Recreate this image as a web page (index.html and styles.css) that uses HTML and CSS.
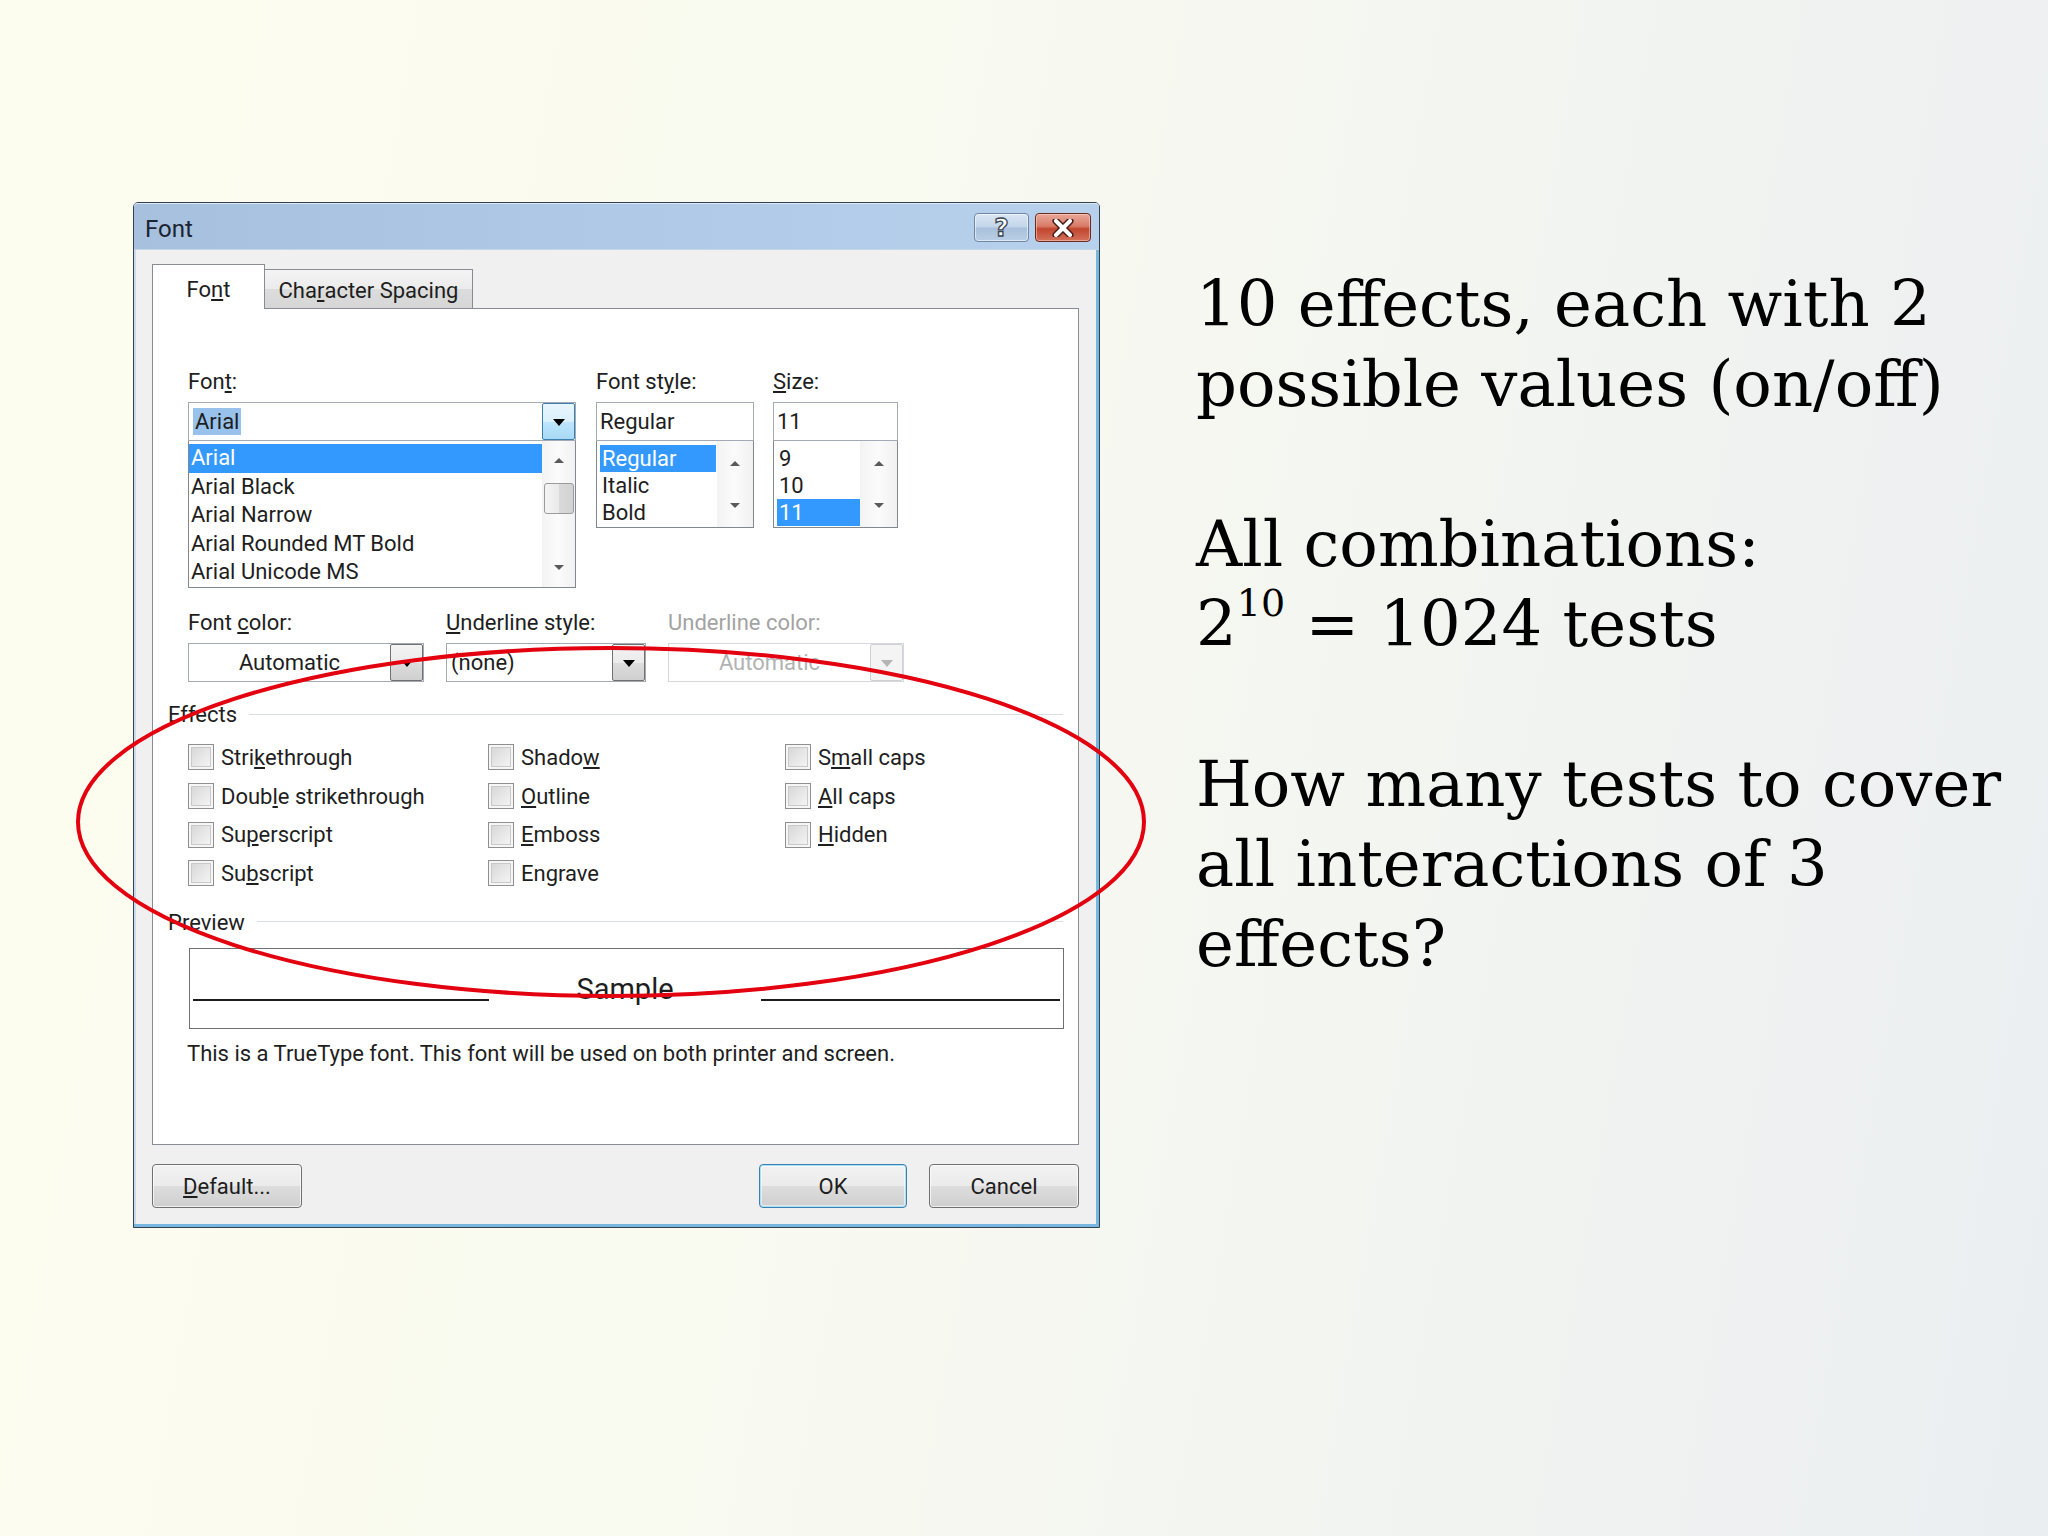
FILE: index.html
```html
<!DOCTYPE html>
<html>
<head>
<meta charset="utf-8">
<title>Font dialog – effects</title>
<link rel="stylesheet" href="styles.css">
</head>
<body>
<div class="slide">
  <div class="dialog">
    <div class="titlebar">
      <span class="title">Font</span>
      <div class="caption-btns">
        <div class="cbtn help"><span class="qmark">?</span></div>
        <div class="cbtn close">
          <svg width="26" height="18" viewBox="0 0 26 18">
            <path d="M6 2 L20 16 M20 2 L6 16" stroke="#4a1c18" stroke-width="7" stroke-linecap="round" fill="none"/>
            <path d="M6 2 L20 16 M20 2 L6 16" stroke="#ffffff" stroke-width="4" stroke-linecap="round" fill="none"/>
          </svg>
        </div>
      </div>
    </div>
    <div class="dlg-body">
      <div class="tabs">
        <div class="tab active">Fo<u>n</u>t</div>
        <div class="tab">Cha<u>r</u>acter Spacing</div>
      </div>
      <div class="panel">
        <div class="row1">
          <div class="col col-font">
            <div class="lbl">Fon<u>t</u>:</div>
            <div class="combo">
              <div class="val"><span class="sel-text">Arial</span></div>
              <div class="ddbtn hot"><span class="tri"></span></div>
            </div>
            <div class="listbox lb-font">
              <div class="items">
                <div class="item selected">Arial</div>
                <div class="item">Arial Black</div>
                <div class="item">Arial Narrow</div>
                <div class="item">Arial Rounded MT Bold</div>
                <div class="item">Arial Unicode MS</div>
              </div>
              <div class="scroll sc-font">
                <span class="arr-up"></span>
                <span class="thumb"></span>
                <span class="grow"></span>
                <span class="arr-down"></span>
              </div>
            </div>
          </div>
          <div class="col col-style">
            <div class="lbl">Font st<u>y</u>le:</div>
            <div class="edit">Regular</div>
            <div class="listbox lb-small">
              <div class="items items-small">
                <div class="item2 selected">Regular</div>
                <div class="item2">Italic</div>
                <div class="item2">Bold</div>
              </div>
              <div class="scroll sc-style">
                <span class="arr-up"></span>
                <span class="grow"></span>
                <span class="arr-down"></span>
              </div>
            </div>
          </div>
          <div class="col col-size">
            <div class="lbl"><u>S</u>ize:</div>
            <div class="edit">11</div>
            <div class="listbox lb-small">
              <div class="items items-small items-size">
                <div class="item2">9</div>
                <div class="item2">10</div>
                <div class="item2 selected">11</div>
              </div>
              <div class="scroll sc-size">
                <span class="arr-up"></span>
                <span class="grow"></span>
                <span class="arr-down"></span>
              </div>
            </div>
          </div>
        </div>

        <div class="row2">
          <div class="col col-color">
            <div class="lbl">Font <u>c</u>olor:</div>
            <div class="combo">
              <div class="val center">Automatic</div>
              <div class="ddbtn"><span class="tri"></span></div>
            </div>
          </div>
          <div class="col col-ustyle">
            <div class="lbl"><u>U</u>nderline style:</div>
            <div class="combo">
              <div class="val">(none)</div>
              <div class="ddbtn"><span class="tri"></span></div>
            </div>
          </div>
          <div class="col col-ucolor disabled">
            <div class="lbl">Underline color:</div>
            <div class="combo">
              <div class="val center">Automatic</div>
              <div class="ddbtn"><span class="tri"></span></div>
            </div>
          </div>
        </div>

        <div class="group-head effects-head"><span>Effects</span><span class="gline"></span></div>
        <div class="effects">
          <div class="ecol">
            <div class="chk"><span class="box"></span><span>Stri<u>k</u>ethrough</span></div>
            <div class="chk"><span class="box"></span><span>Doub<u>l</u>e strikethrough</span></div>
            <div class="chk"><span class="box"></span><span>Su<u>p</u>erscript</span></div>
            <div class="chk"><span class="box"></span><span>Su<u>b</u>script</span></div>
          </div>
          <div class="ecol">
            <div class="chk"><span class="box"></span><span>Shado<u>w</u></span></div>
            <div class="chk"><span class="box"></span><span><u>O</u>utline</span></div>
            <div class="chk"><span class="box"></span><span><u>E</u>mboss</span></div>
            <div class="chk"><span class="box"></span><span>En<u>g</u>rave</span></div>
          </div>
          <div class="ecol">
            <div class="chk"><span class="box"></span><span>S<u>m</u>all caps</span></div>
            <div class="chk"><span class="box"></span><span><u>A</u>ll caps</span></div>
            <div class="chk"><span class="box"></span><span><u>H</u>idden</span></div>
          </div>
        </div>

        <div class="group-head preview-head"><span>Preview</span><span class="gline"></span></div>
        <div class="preview-box">
          <div class="preview-inner">
            <span class="pline pl-left"></span>
            <span class="sample">Sample</span>
            <span class="pline pl-right"></span>
          </div>
        </div>
        <div class="desc">This is a TrueType font. This font will be used on both printer and screen.</div>
      </div>

      <div class="buttons">
        <div class="btn"><u>D</u>efault...</div>
        <div class="spacer"></div>
        <div class="btn ok">OK</div>
        <div class="btn">Cancel</div>
      </div>
    </div>
  </div>

  <div class="notes">
    <p class="note">10 effects, each with 2<br>possible values (on/off)</p>
    <p class="note">All combinations:<br>2<span class="sup">10</span> = 1024 tests</p>
    <p class="note">How many tests to cover<br>all interactions of 3<br>effects?</p>
  </div>

  <svg class="ring" width="2048" height="1536" viewBox="0 0 2048 1536">
    <ellipse cx="611" cy="822" rx="533" ry="174" fill="none" stroke="#e3000f" stroke-width="4"/>
  </svg>
</div>
</body>
</html>
```

FILE: styles.css
```css
html, body {
  margin: 0;
  padding: 0;
}

body {
  width: 2048px;
  height: 1536px;
  overflow: hidden;
  background: linear-gradient(100deg, #fdfdef 0%, #f9faf0 40%, #f1f3f1 75%, #ebeef1 100%);
}

.slide {
  position: relative;
  width: 2048px;
  height: 1536px;
  display: flex;
  align-items: flex-start;
}

/* ---------- dialog ---------- */
.dialog {
  margin-left: 133px;
  margin-top: 202px;
  width: 967px;
  height: 1026px;
  box-sizing: border-box;
  border: 1px solid #34404e;
  border-radius: 5px 5px 0 0;
  background: #f0f0f0;
  box-shadow: inset -3px -3px 0 #77b6df, inset 2px 0 0 #c9dcef;
  font-family: Roboto, "Noto Sans", sans-serif;
  font-size: 22px;
  color: #1e1e1e;
  display: flex;
  flex-direction: column;
}

.titlebar {
  height: 46px;
  flex: none;
  display: flex;
  align-items: flex-start;
  background: linear-gradient(90deg, #a7c0dd 0%, #b0c9e6 50%, #b7d0ec 100%);
  border-bottom: 1px solid #c4d6ea;
  border-radius: 4px 4px 0 0;
  box-shadow: inset 0 1px 0 #dbe8f6;
}

.title {
  margin-left: 11px;
  margin-top: 11px;
  font-size: 24px;
  line-height: 30px;
  color: #1a2433;
}

.caption-btns {
  margin-left: auto;
  margin-right: 8px;
  margin-top: 10px;
  display: flex;
  gap: 6px;
}

.cbtn {
  height: 29px;
  box-sizing: border-box;
  border-radius: 4px;
  display: flex;
  align-items: center;
  justify-content: center;
}

.cbtn.help {
  width: 55px;
  border: 1px solid #6f87a6;
  background: linear-gradient(#d9e6f3 0%, #c3d5ea 48%, #a9c0db 52%, #b9cfe6 100%);
  box-shadow: inset 0 0 0 1px rgba(255, 255, 255, 0.55);
}

.qmark {
  font-family: "DejaVu Sans", sans-serif;
  font-weight: bold;
  font-size: 25px;
  line-height: 25px;
  color: #ffffff;
  -webkit-text-stroke: 1.3px #3d4650;
}

.cbtn.close {
  width: 56px;
  border: 1px solid #6b2a22;
  background: linear-gradient(#e9a898 0%, #d77c68 45%, #c2462f 55%, #d3715a 100%);
  box-shadow: inset 0 0 0 1px rgba(255, 220, 210, 0.5);
}

.dlg-body {
  flex: 1;
  padding: 14px 20px 0 18px;
  display: flex;
  flex-direction: column;
}

/* ---------- tabs ---------- */
.tabs {
  position: relative;
  z-index: 1;
  height: 45px;
  margin-bottom: -1px;
  display: flex;
  align-items: flex-end;
}

.tab {
  box-sizing: border-box;
  border: 1px solid #898c95;
  display: flex;
  align-items: center;
  justify-content: center;
  white-space: nowrap;
}

.tab.active {
  width: 113px;
  height: 45px;
  border-bottom: none;
  background: #ffffff;
  padding-top: 5px;
}

.tab:not(.active) {
  width: 209px;
  height: 40px;
  margin-left: -1px;
  background: linear-gradient(#f4f4f4 0%, #ebebeb 50%, #dcdcdc 51%, #d6d6d6 100%);
  padding-top: 2px;
}

/* ---------- panel ---------- */
.panel {
  width: 927px;
  height: 837px;
  box-sizing: border-box;
  border: 1px solid #898c95;
  background: #ffffff;
  padding: 0 15px;
  display: flex;
  flex-direction: column;
}

.lbl {
  height: 26px;
  line-height: 26px;
  margin-bottom: 7px;
  white-space: nowrap;
}

.col {
  display: flex;
  flex-direction: column;
}

.row1 {
  margin-top: 60px;
  padding-left: 20px;
  display: flex;
  align-items: flex-start;
}

.col-font { width: 388px; }
.col-style { width: 158px; margin-left: 20px; }
.col-size { width: 125px; margin-left: 19px; }

.combo {
  height: 39px;
  box-sizing: border-box;
  border: 1px solid #a4aab3;
  background: #ffffff;
  display: flex;
}

.combo .val {
  flex: 1;
  padding-left: 4px;
  line-height: 37px;
  white-space: nowrap;
  overflow: hidden;
}

.combo .val.center {
  text-align: center;
  padding-left: 0;
}

.sel-text {
  background: #98c2ec;
  padding: 1px 2px;
}

.ddbtn {
  width: 33px;
  flex: none;
  box-sizing: border-box;
  border: 1px solid #707070;
  border-radius: 2px;
  background: linear-gradient(#f3f3f3 0%, #ebebeb 50%, #dddddd 51%, #cfcfcf 100%);
  display: flex;
  align-items: center;
  justify-content: center;
}

.ddbtn.hot {
  border-color: #3c7fb1;
  background: linear-gradient(#eaf6fd 0%, #d9f0fc 50%, #bee6fd 51%, #a7d9f5 100%);
}

.tri {
  width: 0;
  height: 0;
  border-left: 6px solid transparent;
  border-right: 6px solid transparent;
  border-top: 7px solid #000000;
  margin-top: 2px;
}

.edit {
  height: 39px;
  box-sizing: border-box;
  border: 1px solid #a4aab3;
  padding-left: 3px;
  line-height: 37px;
  background: #ffffff;
}

.listbox {
  box-sizing: border-box;
  border: 1px solid #828790;
  border-top: none;
  display: flex;
  background: #ffffff;
}

.lb-font { height: 147px; }
.lb-small { height: 87px; }

.items {
  flex: 1;
  padding-top: 3px;
  overflow: hidden;
}

.item {
  height: 28.6px;
  line-height: 28.6px;
  padding-left: 2px;
  white-space: nowrap;
}

.items-small {
  padding: 4px 1px 0 3px;
}

.items-size {
  padding-right: 0;
}

.item2 {
  height: 27px;
  line-height: 27px;
  padding-left: 2px;
}

.item.selected, .item2.selected {
  background: #3399ff;
  color: #ffffff;
}

.scroll {
  flex: none;
  display: flex;
  flex-direction: column;
  align-items: center;
  background: linear-gradient(90deg, #f3f3f3, #fbfbfb 50%, #f1f1f1);
}

.sc-font { width: 33px; padding: 17px 0; box-sizing: border-box; }
.sc-style { width: 36px; padding: 20px 0 19px; box-sizing: border-box; }
.sc-size { width: 37px; padding: 20px 0 19px; box-sizing: border-box; }

.arr-up {
  width: 0;
  height: 0;
  border-left: 5px solid transparent;
  border-right: 5px solid transparent;
  border-bottom: 5px solid #5a5a5a;
}

.arr-down {
  width: 0;
  height: 0;
  border-left: 5px solid transparent;
  border-right: 5px solid transparent;
  border-top: 5px solid #5a5a5a;
}

.thumb {
  margin-top: 20px;
  width: 30px;
  height: 31px;
  box-sizing: border-box;
  border: 1px solid #9b9b9b;
  border-radius: 3px;
  background: linear-gradient(90deg, #f5f5f5 0%, #e9e9e9 50%, #d9d9d9 51%, #d2d2d2 100%);
}

.grow { flex: 1; }

/* row 2 */
.row2 {
  margin-top: 22px;
  padding-left: 20px;
  display: flex;
}

.col-color { width: 236px; }
.col-ustyle { width: 200px; margin-left: 22px; }
.col-ucolor { width: 236px; margin-left: 22px; }

.disabled .lbl { color: #a3a3a3; }
.disabled .combo { border-color: #d5d8dc; }
.disabled .val { color: #b2b2b2; }
.disabled .ddbtn {
  border-color: #d0d0d0;
  background: #f4f4f4;
}
.disabled .tri { border-top-color: #b5b5b5; }

/* group heads */
.group-head {
  height: 26px;
  display: flex;
  align-items: center;
  line-height: 26px;
}

.gline {
  flex: 1;
  height: 1px;
  background: #d5dfe5;
  margin-left: 12px;
  margin-top: -2px;
}

.effects-head { margin-top: 20px; }

.effects {
  margin-top: 10px;
  padding-left: 20px;
  display: grid;
  grid-template-columns: 300px 297px 1fr;
}

.ecol {
  display: flex;
  flex-direction: column;
}

.chk {
  height: 38.7px;
  display: flex;
  align-items: center;
  gap: 7px;
  white-space: nowrap;
}

.box {
  width: 26px;
  height: 26px;
  flex: none;
  box-sizing: border-box;
  border: 1px solid #8f8f8f;
  background: linear-gradient(135deg, #d3d3d3 0%, #e6e6e6 50%, #f8f8f8 100%);
  box-shadow: inset 0 0 0 2px #f6f6f6, inset 0 0 0 3px #c9c9c9;
}

.preview-head { margin-top: 17px; }

.preview-box {
  margin-top: 12px;
  margin-left: 21px;
  width: 875px;
  height: 81px;
  box-sizing: border-box;
  border: 1px solid #707070;
  padding: 0 3px;
}

.preview-inner {
  height: 52px;
  display: flex;
  align-items: flex-end;
}

.pline {
  height: 2px;
  background: #1c1c1c;
}

.pl-left { width: 296px; }
.pl-right { flex: 1; }

.sample {
  width: 272px;
  text-align: center;
  font-size: 29px;
  line-height: 34px;
  margin-bottom: -5px;
}

.desc {
  margin-top: 12px;
  margin-left: 19px;
  height: 26px;
  line-height: 26px;
  white-space: nowrap;
}

/* buttons */
.buttons {
  margin-top: 19px;
  display: flex;
  gap: 22px;
}

.spacer { flex: 1; }

.btn {
  width: 150px;
  height: 44px;
  box-sizing: border-box;
  border: 1px solid #707070;
  border-radius: 4px;
  background: linear-gradient(#f2f2f2 0%, #ebebeb 50%, #dddddd 51%, #cfcfcf 100%);
  box-shadow: inset 0 0 0 1px rgba(255, 255, 255, 0.7);
  display: flex;
  align-items: center;
  justify-content: center;
}

.btn.ok {
  width: 148px;
  border-color: #3c7fb1;
  box-shadow: inset 0 0 0 1px #a7e1f8, inset 0 0 0 2px rgba(255, 255, 255, 0.5);
}

/* ---------- slide text ---------- */
.notes {
  margin-left: 96px;
  margin-top: 264px;
  font-family: "DejaVu Serif", "Liberation Serif", serif;
  font-size: 64px;
  line-height: 80px;
  color: #000000;
  white-space: nowrap;
}

.note {
  margin: 0 0 80px 0;
}

.sup {
  font-size: 38px;
  line-height: 0;
  vertical-align: 30px;
}

/* ---------- annotation ring ---------- */
.ring {
  position: absolute;
  left: 0;
  top: 0;
  pointer-events: none;
}
```
